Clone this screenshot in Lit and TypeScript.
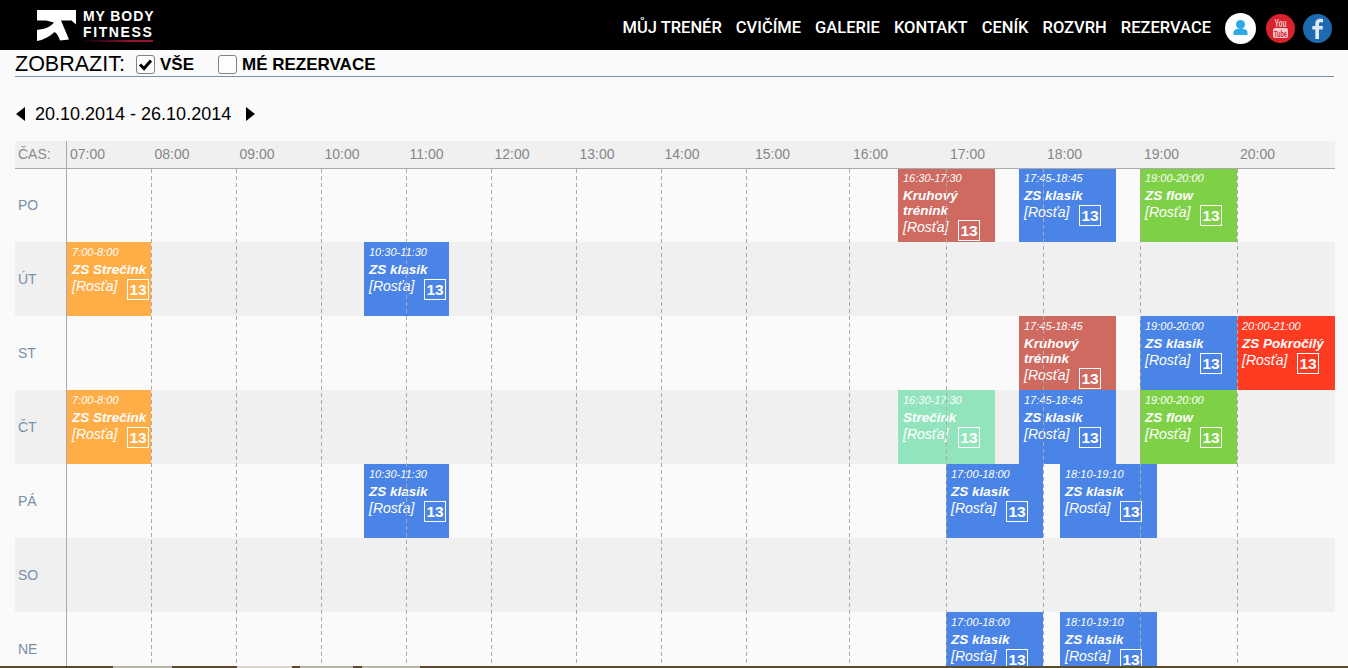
import { LitElement, html, css, nothing } from "lit";
import { customElement } from "lit/decorators.js";

const LINES: Record<number, number> = { 7: 66, 8: 151, 9: 236, 10: 321, 11: 406, 12: 491, 13: 576, 14: 661, 15: 746, 16: 849, 17: 946, 18: 1043, 19: 1140, 20: 1237, 21: 1335 };
const HOURS = [7, 8, 9, 10, 11, 12, 13, 14, 15, 16, 17, 18, 19, 20];
const xAt = (t: string) => {
  const [h, m] = t.split(":").map(Number);
  const next = LINES[h + 1] ?? LINES[h];
  const x = LINES[h] + ((next - LINES[h]) * m) / 60;
  return Math.ceil(h === 7 && m === 0 ? 67 : x);
};

type Ev = { from: string; to: string; title: string; color: string };
const BLUE = "#4a84e6", GREEN = "#7ed146", ROSE = "#cf6a61", ORANGE = "#ffad47", RED = "#ff3b22", MINT = "#92e4bd";
const DAYS: { name: string; events: Ev[] }[] = [
  { name: "PO", events: [
    { from: "16:30", to: "17:30", title: "Kruhový trénink", color: ROSE },
    { from: "17:45", to: "18:45", title: "ZS klasik", color: BLUE },
    { from: "19:00", to: "20:00", title: "ZS flow", color: GREEN },
  ] },
  { name: "ÚT", events: [
    { from: "7:00", to: "8:00", title: "ZS Strečink", color: ORANGE },
    { from: "10:30", to: "11:30", title: "ZS klasik", color: BLUE },
  ] },
  { name: "ST", events: [
    { from: "17:45", to: "18:45", title: "Kruhový trénink", color: ROSE },
    { from: "19:00", to: "20:00", title: "ZS klasik", color: BLUE },
    { from: "20:00", to: "21:00", title: "ZS Pokročilý", color: RED },
  ] },
  { name: "ČT", events: [
    { from: "7:00", to: "8:00", title: "ZS Strečink", color: ORANGE },
    { from: "16:30", to: "17:30", title: "Strečink", color: MINT },
    { from: "17:45", to: "18:45", title: "ZS klasik", color: BLUE },
    { from: "19:00", to: "20:00", title: "ZS flow", color: GREEN },
  ] },
  { name: "PÁ", events: [
    { from: "10:30", to: "11:30", title: "ZS klasik", color: BLUE },
    { from: "17:00", to: "18:00", title: "ZS klasik", color: BLUE },
    { from: "18:10", to: "19:10", title: "ZS klasik", color: BLUE },
  ] },
  { name: "SO", events: [] },
  { name: "NE", events: [
    { from: "17:00", to: "18:00", title: "ZS klasik", color: BLUE },
    { from: "18:10", to: "19:10", title: "ZS klasik", color: BLUE },
  ] },
];
const NAV = ["MŮJ TRENÉR", "CVIČÍME", "GALERIE", "KONTAKT", "CENÍK", "ROZVRH", "REZERVACE"];

@customElement("app-root")
export class AppRoot extends LitElement {
  static styles = css`
    :host { display: block; height: 668px; overflow: hidden; background: #fafafa; font-family: "Liberation Sans", Arial, sans-serif; color: #000; }
    .page { height: 668px; display: flex; flex-direction: column; }
    .top { flex: none; height: 50px; background: #000; display: flex; align-items: center; padding: 4px 16px 0 37px; box-sizing: border-box; }
    .logo { display: flex; align-items: flex-start; height: 32px; align-self: flex-start; margin-top: 6px; position: relative; }
    .logo svg { display: block; }
    .brand { margin: -2px 0 0 6px; color: #fff; font-weight: 700; font-size: 14px; line-height: 16px; letter-spacing: 0.9px; white-space: nowrap; }
    .brand div:last-child { letter-spacing: 1.6px; }
    .swoosh { position: absolute; left: 43px; bottom: 0; width: 73px; height: 2px; background: linear-gradient(90deg, #000, #9a1030 70%); }
    nav { margin-left: auto; display: flex; gap: 14px; color: #fff; font-family: Roboto, sans-serif; font-weight: 500; font-size: 16.5px; }
    .icons { display: flex; align-items: center; margin: 3px 0 0 14px; }
    .icons svg { display: block; flex: none; }
    .icons .yt { margin: 0 8px 0 10px; }
    .filter { flex: none; margin: 0 14px 0 15px; height: 27px; padding-top: 3px; box-sizing: border-box; border-bottom: 1px solid #7c8fa8; display: flex; align-items: center; font-size: 21.5px; }
    .filter .lbl { width: 121px; }
    .check { width: 17px; height: 17px; border: 1px solid #76858f; border-radius: 3px; background: #fdfdfd; display: block; flex: none; }
    .opt { font-size: 17px; font-weight: 700; margin-left: 5px; }
    .opt.first { width: 58px; }
    .date { flex: none; height: 64px; padding: 10px 0 0 16px; display: flex; align-items: center; font-size: 18px; box-sizing: border-box; }
    .date span { margin: 0 15px 0 10px; }
    .tri-l { width: 0; height: 0; border-style: solid; border-width: 7px 9px 7px 0; border-color: transparent #000 transparent transparent; }
    .tri-r { width: 0; height: 0; border-style: solid; border-width: 7px 0 7px 9px; border-color: transparent transparent transparent #000; }
    .table { flex: 1; min-height: 0; margin-left: 15px; width: 1320px; position: relative; overflow: hidden; }
    .cols { display: grid; grid-template-columns: 52px repeat(8, 85px) 103px repeat(4, 97px) 98px; }
    .head { height: 27px; position: relative; z-index: 1; background: #f0f0f0; box-shadow: 0 1px 0 #aaa; color: #868686; font-size: 14px; line-height: 27px; }
    .head div { padding-left: 3px; box-sizing: border-box; }
    .head div:nth-child(n+3):nth-child(-n+9) { padding-left: 2.5px; }
    .head div:nth-child(10) { padding-left: 8px; }
    .head div:last-child { padding-left: 2px; }
    .head .c0 { border-right: 1px solid #aaa; color: #8a8a8a; }
    .row { height: 74px; display: flex; position: relative; }
    .row:nth-child(even) { background: #f0f0f0; }
    .row:nth-child(odd) { background: #fafafa; }
    .day { width: 52px; box-sizing: border-box; padding-left: 3px; line-height: 74px; font-size: 14px; color: #7a8fa8; }
    .ev { position: absolute; top: 0; bottom: 0; padding: 4px 0 0 5px; box-sizing: border-box; color: #fff; font-style: italic; overflow: hidden; }
    .time { font-size: 11px; line-height: 13px; }
    .title { font-size: 13.5px; font-weight: 700; line-height: 15px; margin-top: 3px; padding-right: 2px; }
    .meta { display: flex; align-items: flex-start; margin-top: 1px; }
    .who { font-size: 14px; line-height: 17px; white-space: nowrap; width: 55px; flex: none; }
    .badge { width: 22px; height: 21px; box-sizing: border-box; border: 1px solid #fff; font-style: normal; font-weight: 700; font-size: 15.5px; line-height: 19px; text-align: center; flex: none; margin-top: 1px; }
    .grid { position: absolute; left: 0; right: 0; top: 28px; bottom: 0; pointer-events: none; }
    .grid div { height: 100%; box-sizing: border-box; }
    .grid .c0 { border-right: 1px solid #aaa; }
    .grid .h { background: repeating-linear-gradient(180deg, #aaa 0 4px, transparent 4px 7px) right top / 1px 100% no-repeat; }
    .grid .h:last-child { background: none; }
    .foot { flex: none; height: 2px; background: linear-gradient(90deg, #5d4b28 113px, #b8b3a4 113px 172px, #5d4b28 172px 237px, #d8d4c8 237px 292px, #5d4b28 292px 300px, #b8b3a4 300px 353px, #5d4b28 353px 362px, #b8b3a4 362px 420px, #5d4b28 420px); }
  `;

  private event(e: Ev) {
    const l = xAt(e.from), r = xAt(e.to);
    return html`<div class="ev" style="left:${l - 15}px;width:${r - l}px;background:${e.color}">
      <div class="time">${e.from}-${e.to}</div>
      <div class="title">${e.title}</div>
      <div class="meta"><div class="who">[Rosťa]</div><div class="badge">13</div></div>
    </div>`;
  }

  render() {
    return html`<div class="page">
      <header class="top">
        <div class="logo">
          <svg width="40" height="31" viewBox="0 0 40 31">
            <path fill="#fff" d="M0 0H39V14.500L34.500 10.500H24L32 29.500L23 30.500C21.500 26 20 23.500 17.500 22C12 27 6 30 0 31V20C6 19 13 18 17 12.500L9 10.500H0Z" />
          </svg>
          <div class="brand"><div>MY BODY</div><div>FITNESS</div></div>
          <div class="swoosh"></div>
        </div>
        <nav>${NAV.map((n) => html`<span>${n}</span>`)}</nav>
        <div class="icons">
          <svg width="31" height="31" viewBox="0 0 31 31">
            <circle cx="15.500" cy="15.500" r="15.500" fill="#fff" />
            <circle cx="15.500" cy="11.500" r="4.500" fill="#2ea9e8" />
            <path fill="#2ea9e8" d="M8.500 22V19.500C8.500 17 11 16 13 16H18C20 16 22.500 17 22.500 19.500V22Z" />
          </svg>
          <svg class="yt" width="29" height="29" viewBox="0 0 29 29">
            <circle cx="14.500" cy="14.500" r="14.500" fill="#d9222d" />
            <text x="14.500" y="13" text-anchor="middle" font-family="Liberation Sans Narrow, Liberation Sans" font-weight="700" font-size="10" fill="#f6c9cc" textLength="12" lengthAdjust="spacingAndGlyphs">You</text>
            <rect x="7" y="14" width="15" height="10" rx="2" fill="#f6c9cc" />
            <text x="14.500" y="22.500" text-anchor="middle" font-family="Liberation Sans" font-weight="700" font-size="8.500" fill="#d9222d" textLength="13" lengthAdjust="spacingAndGlyphs">Tube</text>
          </svg>
          <svg width="29" height="29" viewBox="0 0 29 29">
            <circle cx="14.500" cy="14.500" r="14.500" fill="#1d6ab0" />
            <path fill="#dfe8f3" d="M16 25V15.500H19.500L20 12H16V9.800C16 8.700 16.500 8.200 17.700 8.200H20V4.900C19.500 4.800 18.300 4.700 17.100 4.700C14.300 4.700 12.300 6.400 12.300 9.400V12H9.300V15.500H12.300V25Z" />
          </svg>
        </div>
      </header>
      <div class="filter">
        <div class="lbl">ZOBRAZIT:</div>
        <svg class="check" viewBox="0 0 17 17"><path d="M3 8.500L7 12.500L14 4.500" fill="none" stroke="#000" stroke-width="3" /></svg>
        <div class="opt first">VŠE</div>
        <svg class="check" viewBox="0 0 17 17"></svg>
        <div class="opt">MÉ REZERVACE</div>
      </div>
      <div class="date"><i class="tri-l"></i><span>20.10.2014 - 26.10.2014</span><i class="tri-r"></i></div>
      <div class="table">
        <div class="cols head">
          <div class="c0">ČAS:</div>
          ${HOURS.map((h) => html`<div>${String(h).padStart(2, "0")}:00</div>`)}
        </div>
        <div>
          ${DAYS.map((d) => html`<div class="row"><div class="day">${d.name}</div>${d.events.length ? d.events.map((e) => this.event(e)) : nothing}</div>`)}
        </div>
        <div class="cols grid">
          <div class="c0"></div>
          ${HOURS.map(() => html`<div class="h"></div>`)}
        </div>
      </div>
      <div class="foot"></div>
    </div>`;
  }
}
